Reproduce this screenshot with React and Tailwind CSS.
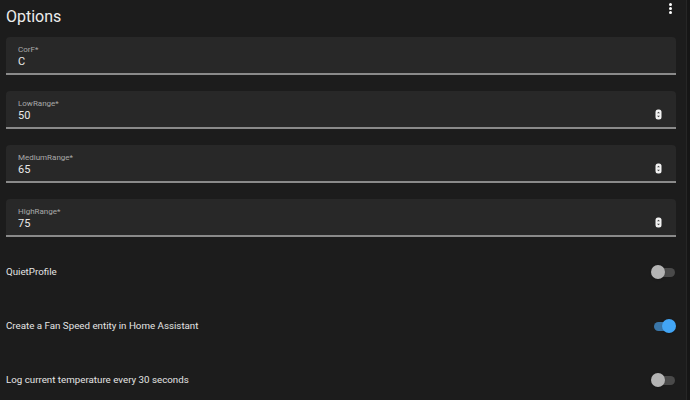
import React, { useState } from "react";

const Spin = () => (
  <svg width="7" height="11" viewBox="0 0 7 11" className="shrink-0">
    <rect x="0.5" y="0.5" width="6" height="10" rx="2.5" fill="#f2f2f2" />
    <path d="M2 4.2 L3.5 2.8 L5 4.2 Z" fill="#444" />
    <path d="M2 6.8 L3.5 8.2 L5 6.8 Z" fill="#444" />
  </svg>
);

const Field = ({ label, value, number }) => (
  <div className="shrink-0 h-[38px] rounded-t-[4px] bg-[#282828] border-b-2 border-[#8a8a8a] flex items-center pl-[12px] pr-[14px]">
    <div className="flex-1 flex flex-col pt-[3px]">
      <span className="text-[8px] leading-[10px] text-[#a8a8a8]">{label}</span>
      <span className="text-[11px] leading-[14px] text-[#e8e8e8]">{value}</span>
    </div>
    {number ? (
      <div className="pt-[10px]">
        <Spin />
      </div>
    ) : null}
  </div>
);

const Toggle = ({ on }) => (
  <div className="relative w-[25px] h-[14px] flex items-center">
    <div
      className={`h-[9px] w-[21px] ml-[3px] rounded-full ${on ? "bg-[#3a76a8]" : "bg-[#4a4a4a]"}`}
    />
    <div
      className={`absolute top-0 w-[14px] h-[14px] rounded-full shadow ${
        on ? "left-[11px] bg-[#42a5f5]" : "left-0 bg-[#b4b4b4]"
      }`}
    />
  </div>
);

export default function App() {
  const [toggles] = useState([
    { label: "QuietProfile", on: false },
    { label: "Create a Fan Speed entity in Home Assistant", on: true },
    { label: "Log current temperature every 30 seconds", on: false },
  ]);

  return (
    <div className="w-[690px] h-[400px] bg-[#1c1c1c] flex overflow-hidden font-['Roboto',sans-serif]">
      <div className="flex-1 flex flex-col pl-[6px] pr-[10px]">
        <div className="shrink-0 h-[33px] flex items-center justify-between">
          <h1 className="text-[16px] text-[#ececec] leading-none pt-[1px]">Options</h1>
          <div className="self-start pt-[3px] pr-[4px] flex flex-col gap-[1px]">
            <span className="w-[3px] h-[3px] rounded-full bg-white" />
            <span className="w-[3px] h-[3px] rounded-full bg-white" />
            <span className="w-[3px] h-[3px] rounded-full bg-white" />
          </div>
        </div>
        <div className="shrink-0 flex flex-col gap-[16px] mt-[4px]">
          <Field label="CorF*" value="C" />
          <Field label="LowRange*" value="50" number />
          <Field label="MediumRange*" value="65" number />
          <Field label="HighRange*" value="75" number />
        </div>
        <div className="shrink-0 flex flex-col mt-[8px]">
          {toggles.map((t) => (
            <div key={t.label} className="shrink-0 h-[54px] flex items-center justify-between">
              <span className="text-[9.75px] text-[#e4e4e4]">{t.label}</span>
              <Toggle on={t.on} />
            </div>
          ))}
        </div>
      </div>
      <div className="w-[4px] bg-[#161616] border-l border-[#262626]" />
    </div>
  );
}
